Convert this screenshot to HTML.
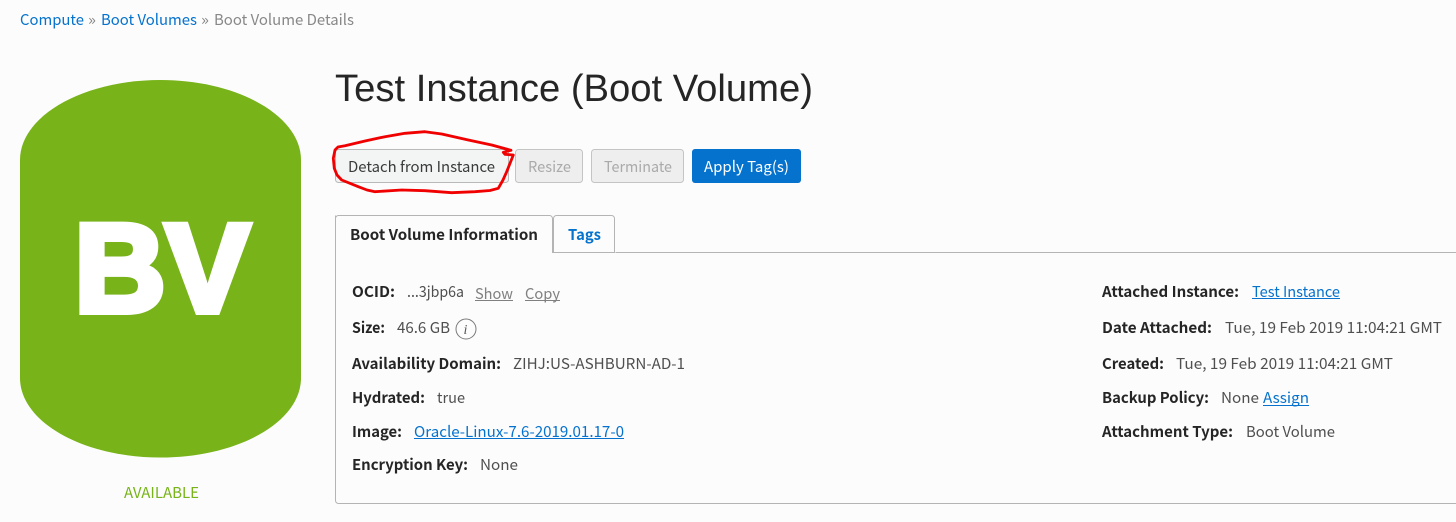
<!DOCTYPE html>
<html lang="en">
<head>
<meta charset="utf-8">
<title>Boot Volume Details</title>
<style>
html,body{margin:0;padding:0;background:#fcfcfc;width:1456px;height:522px;overflow:hidden}
svg{display:block}
text{font-family:"Noto Sans CJK JP","Liberation Sans",sans-serif;font-size:15px;fill:#4f4f4f}
.b{font-weight:700;fill:#252525}
.l{fill:#0572ce}
.g{fill:#888}
.d{fill:#aaa}
</style>
</head>
<body>
<svg width="1456" height="522" viewBox="0 0 1456 522" xmlns="http://www.w3.org/2000/svg">
<rect width="1456" height="522" fill="#fcfcfc"/>

<!-- breadcrumb -->
<text x="20" y="25" class="l" textLength="64" lengthAdjust="spacingAndGlyphs">Compute</text>
<text x="88" y="25" class="g" textLength="8" lengthAdjust="spacingAndGlyphs">»</text>
<text x="101" y="25" class="l" textLength="96" lengthAdjust="spacingAndGlyphs">Boot Volumes</text>
<text x="201" y="25" class="g" textLength="8" lengthAdjust="spacingAndGlyphs">»</text>
<text x="214" y="25" class="g" textLength="140" lengthAdjust="spacingAndGlyphs">Boot Volume Details</text>

<!-- cylinder -->
<path d="M20 160C20 116 83 80 160.500 80S301 116 301 160V378C301 422 238 457.500 160.500 457.500S20 422 20 378Z" fill="#77b319"/>
<text x="74.500" y="311.500" textLength="175" lengthAdjust="spacingAndGlyphs" style="font-family:'Liberation Sans',sans-serif;font-weight:700;font-size:125px;fill:#fff;stroke:#fff;stroke-width:7px;stroke-linejoin:miter;stroke-miterlimit:3">BV</text>
<text x="124" y="498" textLength="75" lengthAdjust="spacingAndGlyphs" style="fill:#77b319">AVAILABLE</text>

<!-- title -->
<text x="335" y="101" textLength="478" lengthAdjust="spacingAndGlyphs" style="font-family:'Liberation Sans',sans-serif;font-size:38px;fill:#252525">Test Instance (Boot Volume)</text>

<!-- buttons -->
<rect x="335.500" y="149.500" width="173" height="33" rx="3" fill="#f3f5f4" stroke="#b9b9b9"/>
<text x="348" y="172" textLength="147" lengthAdjust="spacingAndGlyphs" style="fill:#3a3a3a">Detach from Instance</text>
<rect x="515.500" y="149.500" width="67" height="33" rx="3" fill="#eeeeee" stroke="#c4c4c4"/>
<text x="528" y="172" class="d" textLength="43" lengthAdjust="spacingAndGlyphs">Resize</text>
<rect x="591.500" y="149.500" width="92" height="33" rx="3" fill="#eeeeee" stroke="#c4c4c4"/>
<text x="604" y="172" class="d" textLength="68" lengthAdjust="spacingAndGlyphs">Terminate</text>
<rect x="692" y="149" width="109" height="34" rx="3" fill="#0572ce"/>
<text x="704" y="172" textLength="85" lengthAdjust="spacingAndGlyphs" style="fill:#fff">Apply Tag(s)</text>

<!-- panel and tabs -->
<path d="M1456 252.500H615.500M335.500 215.500V500.500a3 3 0 0 0 3 3H1456" fill="none" stroke="#b4b4b4"/>
<path d="M335.500 253V218.500a3 3 0 0 1 3-3H549.500a3 3 0 0 1 3 3V253" fill="#fcfcfc" stroke="#b4b4b4"/>
<path d="M553.500 252.500V218.500a3 3 0 0 1 3-3H611.500a3 3 0 0 1 3 3V252.500Z" fill="#fcfcfc" stroke="#b4b4b4"/>
<text x="350" y="240" class="b" textLength="188" lengthAdjust="spacingAndGlyphs">Boot Volume Information</text>
<text x="568" y="240" class="b" textLength="33" lengthAdjust="spacingAndGlyphs" style="fill:#0572ce">Tags</text>

<!-- left column -->
<text x="352" y="297" class="b" textLength="43" lengthAdjust="spacingAndGlyphs">OCID:</text>
<text x="407" y="297" textLength="57" lengthAdjust="spacingAndGlyphs">...3jbp6a</text>
<text x="475" y="299" textLength="38" lengthAdjust="spacingAndGlyphs" style="fill:#808080">Show</text>
<rect x="475" y="300" width="38" height="1" fill="#808080"/>
<text x="525" y="299" textLength="35" lengthAdjust="spacingAndGlyphs" style="fill:#808080">Copy</text>
<rect x="525" y="300" width="35" height="1" fill="#808080"/>

<text x="352" y="333" class="b" textLength="33" lengthAdjust="spacingAndGlyphs">Size:</text>
<text x="397" y="333" textLength="53" lengthAdjust="spacingAndGlyphs">46.6 GB</text>
<circle cx="466" cy="329" r="10" fill="none" stroke="#7a7a7a"/>
<text x="463.500" y="334" style="font-family:'Liberation Serif',serif;font-style:italic;font-size:14px;fill:#555">i</text>

<text x="352" y="369" class="b" textLength="149" lengthAdjust="spacingAndGlyphs">Availability Domain:</text>
<text x="513" y="369" textLength="172" lengthAdjust="spacingAndGlyphs">ZIHJ:US-ASHBURN-AD-1</text>

<text x="352" y="403" class="b" textLength="73" lengthAdjust="spacingAndGlyphs">Hydrated:</text>
<text x="437" y="403" textLength="28" lengthAdjust="spacingAndGlyphs">true</text>

<text x="352" y="437" class="b" textLength="50" lengthAdjust="spacingAndGlyphs">Image:</text>
<text x="414" y="437" class="l" textLength="210" lengthAdjust="spacingAndGlyphs">Oracle-Linux-7.6-2019.01.17-0</text>
<rect x="414" y="438" width="210" height="1" fill="#0572ce"/>

<text x="352" y="470" class="b" textLength="116" lengthAdjust="spacingAndGlyphs">Encryption Key:</text>
<text x="480" y="470" textLength="38" lengthAdjust="spacingAndGlyphs">None</text>

<!-- right column -->
<text x="1102" y="297" class="b" textLength="137" lengthAdjust="spacingAndGlyphs">Attached Instance:</text>
<text x="1252" y="297" class="l" textLength="88" lengthAdjust="spacingAndGlyphs">Test Instance</text>
<rect x="1252" y="298" width="88" height="1" fill="#0572ce"/>

<text x="1102" y="333" class="b" textLength="110" lengthAdjust="spacingAndGlyphs">Date Attached:</text>
<text x="1225" y="333" textLength="217" lengthAdjust="spacingAndGlyphs">Tue, 19 Feb 2019 11:04:21 GMT</text>

<text x="1102" y="369" class="b" textLength="62" lengthAdjust="spacingAndGlyphs">Created:</text>
<text x="1176" y="369" textLength="217" lengthAdjust="spacingAndGlyphs">Tue, 19 Feb 2019 11:04:21 GMT</text>

<text x="1102" y="403" class="b" textLength="107" lengthAdjust="spacingAndGlyphs">Backup Policy:</text>
<text x="1221" y="403" textLength="38" lengthAdjust="spacingAndGlyphs">None</text>
<text x="1263" y="403" class="l" textLength="46" lengthAdjust="spacingAndGlyphs">Assign</text>
<rect x="1263" y="405" width="46" height="1" fill="#0572ce"/>

<text x="1102" y="437" class="b" textLength="131" lengthAdjust="spacingAndGlyphs">Attachment Type:</text>
<text x="1246" y="437" textLength="89" lengthAdjust="spacingAndGlyphs">Boot Volume</text>

<!-- red hand-drawn annotation -->
<polyline points="511,150.300 491.700,145 468.300,140 441.700,134 425,131.700 405,133.300 385,136.700 365,141 345,145.700 338,147 335,150 333.300,158.300 334.300,168.300 337,175 341.700,180 358.300,186.700 367,190 375,191.700 401.700,190 425,190.700 451.700,192.700 475,191.700 490,190.500 498.300,188.300 503,180 506.700,171.700 513.300,155 505,154.300 503.300,152.300 511,150.300" fill="none" stroke="#f00000" stroke-width="2.800" stroke-linecap="round" stroke-linejoin="round"/>
</svg>
</body>
</html>
